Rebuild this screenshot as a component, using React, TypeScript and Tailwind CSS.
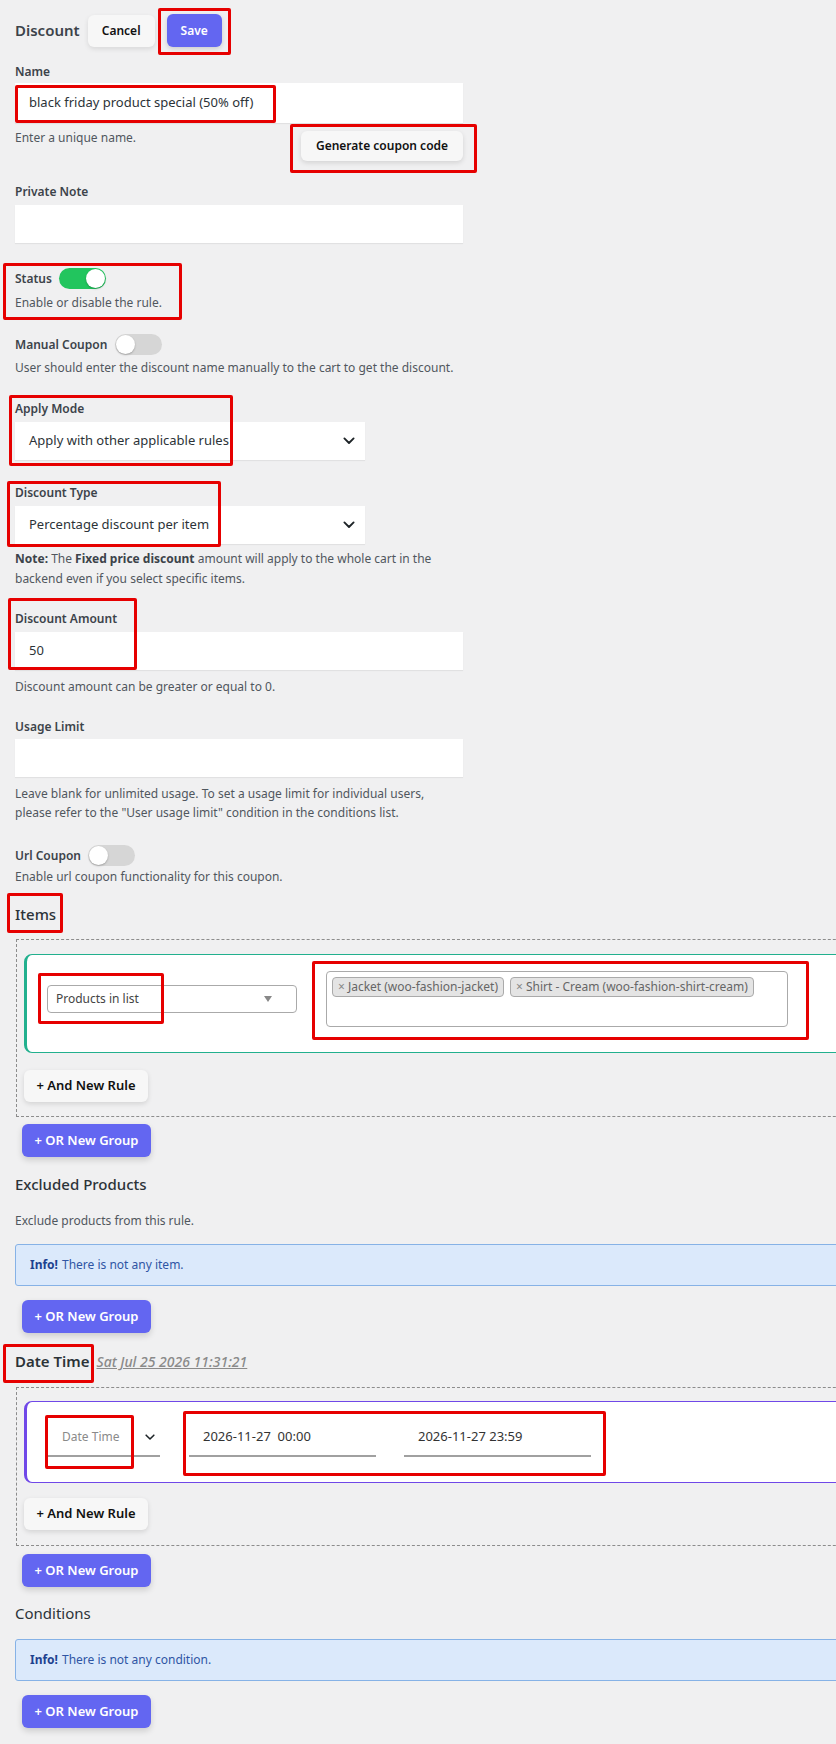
import React from "react";

function Label({ children }: { children: React.ReactNode }) {
  return <div className="text-[12px] leading-[18px] font-semibold text-[#3c434a]">{children}</div>;
}

function Help({ children, className = "" }: { children: React.ReactNode; className?: string }) {
  return <p className={`text-[12px] leading-[18px] text-[#50575e] ${className}`}>{children}</p>;
}

function Toggle({ on = false }: { on?: boolean }) {
  return (
    <span
      className={`inline-flex h-[21px] w-[47px] items-center rounded-full px-[1px] ${
        on ? "justify-end bg-[#22c55e]" : "justify-start bg-[#d6d6d6]"
      }`}
    >
      <span className="h-[19px] w-[19px] rounded-full bg-white shadow-[0_1px_2px_rgba(0,0,0,0.25)]" />
    </span>
  );
}

function Chevron({ size = 12 }: { size?: number }) {
  return (
    <svg width={size} height={size * 0.62} viewBox="0 0 13 8" fill="none">
      <path d="M1.5 1.5 6.5 6.5 11.5 1.5" stroke="#1d2327" strokeWidth="2" strokeLinecap="round" strokeLinejoin="round" />
    </svg>
  );
}

function PlainSelect({ value }: { value: string }) {
  return (
    <div className="mt-[4px] flex h-[38px] w-[350px] items-center justify-between bg-white pl-[14px] pr-[10px] shadow-[0_1px_1px_rgba(0,0,0,0.06)]">
      <span className="text-[13px] text-[#2c3338]">{value}</span>
      <Chevron />
    </div>
  );
}

function OrGroupButton({ className = "" }: { className?: string }) {
  return (
    <button className={`ml-[7px] flex h-[33px] w-[129px] items-center justify-center rounded-[6px] bg-[#6366f1] text-[13px] font-semibold text-white shadow-[0_3px_6px_rgba(0,0,0,0.15)] ${className}`}>
      + OR New Group
    </button>
  );
}

function AndRuleButton({ className = "" }: { className?: string }) {
  return (
    <button className={`flex h-[32px] w-[124px] items-center justify-center rounded-[6px] bg-[#f7f7f7] text-[13px] font-semibold text-[#111] shadow-[0_2px_5px_rgba(0,0,0,0.12)] ${className}`}>
      + And New Rule
    </button>
  );
}

function InfoBox({ text, className = "" }: { text: string; className?: string }) {
  return (
    <div className={`flex h-[42px] w-[900px] items-center rounded-[3px] border border-[#86b2e6] bg-[#dbe9fb] pl-[14px] text-[12px] ${className}`}>
      <span className="font-bold text-[#1d418f]">Info!</span>
      <span className="ml-[4px] text-[#2f55a4]">{text}</span>
    </div>
  );
}

function Tag({ text }: { text: string }) {
  return (
    <span className="flex h-[20px] items-center rounded-[4px] border border-[#aaa] bg-[#e4e4e4] px-[5px] text-[12px] text-[#666]">
      <span className="mr-[3px] text-[#888]">×</span>
      {text}
    </span>
  );
}

function UnderlineField({ children, width }: { children: React.ReactNode; width: string }) {
  return (
    <div className={`flex h-[38px] items-center border-b-2 border-[#a0a0a0] pl-[14px] ${width}`}>{children}</div>
  );
}

export default function App() {
  return (
    <div className="relative min-h-[1744px] w-[836px] overflow-hidden bg-[#f0f0f1] pl-[15px] font-['Noto_Sans','Open_Sans',sans-serif]">
      {/* header */}
      <div className="flex items-center pt-[14px]">
        <h1 className="text-[15px] font-semibold text-[#3c434a]">Discount</h1>
        <button className="ml-2 h-[32px] w-[67px] rounded-[6px] bg-[#f7f7f7] text-[12px] font-semibold text-[#111] shadow-[0_2px_5px_rgba(0,0,0,0.1)]">
          Cancel
        </button>
        <button className="ml-3 h-[33px] w-[55px] rounded-[6px] bg-[#6366f1] text-[12px] font-semibold text-white shadow-[0_2px_5px_rgba(0,0,0,0.15)]">
          Save
        </button>
      </div>

      {/* name */}
      <div className="mt-[16px]">
        <Label>Name</Label>
        <div className="mt-[2px] flex h-[40px] w-[448px] items-center bg-white pl-[14px] text-[13px] text-[#2c3338] shadow-[0_1px_1px_rgba(0,0,0,0.06)]">
          black friday product special (50% off)
        </div>
        <div className="flex w-[448px] items-start justify-between">
          <Help className="mt-[6px]">Enter a unique name.</Help>
          <button className="mt-[8px] h-[30px] w-[162px] rounded-[6px] bg-[#f7f7f7] text-[12px] font-semibold text-[#111] shadow-[0_2px_5px_rgba(0,0,0,0.12)]">
            Generate coupon code
          </button>
        </div>
      </div>

      {/* private note */}
      <div className="mt-[22px]">
        <Label>Private Note</Label>
        <div className="mt-[4px] h-[38px] w-[448px] bg-white shadow-[0_1px_1px_rgba(0,0,0,0.06)]" />
      </div>

      {/* status */}
      <div className="mt-[25px] flex items-center gap-[7px]">
        <Label>Status</Label>
        <Toggle on />
      </div>
      <Help className="mt-[5px]">Enable or disable the rule.</Help>

      <div className="mt-[22px] flex items-center gap-[8px]">
        <Label>Manual Coupon</Label>
        <Toggle />
      </div>
      <Help className="mt-[4px] whitespace-nowrap">
        User should enter the discount name manually to the cart to get the discount.
      </Help>

      {/* apply mode / type */}
      <div className="mt-[23px]">
        <Label>Apply Mode</Label>
        <PlainSelect value="Apply with other applicable rules" />
      </div>
      <div className="mt-[24px]">
        <Label>Discount Type</Label>
        <PlainSelect value="Percentage discount per item" />
      </div>
      <p className="mt-[5px] w-[448px] text-[12px] leading-[20px] text-[#50575e]">
        <b className="font-bold text-[#3c434a]">Note: </b>
        {"The "}
        <b className="font-bold text-[#3c434a]">Fixed price discount</b>
        {" amount will apply to the whole cart in the backend even if you select specific items."}
      </p>

      {/* amount */}
      <div className="mt-[21px]">
        <Label>Discount Amount</Label>
        <div className="mt-[4px] flex h-[38px] w-[448px] items-center bg-white pl-[14px] text-[13px] text-[#2c3338] shadow-[0_1px_1px_rgba(0,0,0,0.06)]">
          50
        </div>
      </div>
      <Help className="mt-[8px]">Discount amount can be greater or equal to 0.</Help>

      {/* usage limit */}
      <div className="mt-[22px]">
        <Label>Usage Limit</Label>
        <div className="mt-[3px] h-[38px] w-[448px] bg-white shadow-[0_1px_1px_rgba(0,0,0,0.06)]" />
      </div>
      <p className="mt-[7px] w-[448px] text-[12px] leading-[19px] text-[#50575e]">
        Leave blank for unlimited usage. To set a usage limit for individual users, please refer to the "User usage limit"
        condition in the conditions list.
      </p>

      <div className="mt-[23px] flex items-center gap-[7px]">
        <Label>Url Coupon</Label>
        <Toggle />
      </div>
      <Help className="mt-[2px]">Enable url coupon functionality for this coupon.</Help>

      {/* items */}
      <h2 className="mt-[17px] text-[15px] leading-[22px] font-medium text-[#2c3338]">Items</h2>
      <div className="ml-[1px] mt-[14px] w-[900px] border border-dashed border-[#8c8c8c] px-[7px] pt-[14px] pb-[14px]">
        <div className="flex items-center rounded-[8px] border border-l-[3px] border-[#22b08e] bg-white pl-[20px] pt-[16px] pb-[25px]">
          <div className="flex h-[28px] w-[250px] items-center justify-between rounded-[4px] border border-[#aaa] pl-[8px] pr-[24px] text-[12px] text-[#444]">
            Products in list
            <svg width="8" height="6" viewBox="0 0 8 6">
              <path d="M0 0h8L4 6z" fill="#888" />
            </svg>
          </div>
          <div className="ml-[29px] flex h-[56px] w-[462px] items-start gap-[6px] rounded-[4px] border border-[#aaa] pl-[5px] pt-[5px]">
            <Tag text="Jacket (woo-fashion-jacket)" />
            <Tag text="Shirt - Cream (woo-fashion-shirt-cream)" />
          </div>
        </div>
        <AndRuleButton className="mt-[17px]" />
      </div>
      <OrGroupButton className="mt-[7px]" />

      {/* excluded */}
      <h2 className="mt-[16px] text-[15px] leading-[22px] font-medium text-[#2c3338]">Excluded Products</h2>
      <Help className="mt-[17px]">Exclude products from this rule.</Help>
      <InfoBox text="There is not any item." className="mt-[14px]" />
      <OrGroupButton className="mt-[14px]" />

      {/* date time */}
      <div className="mt-[17px] flex items-baseline">
        <h2 className="text-[15px] leading-[22px] font-semibold text-[#2c3338]">Date Time</h2>
        <span className="ml-[7px] text-[14px] font-medium italic text-[#8a8a8a] underline">Sat Jul 25 2026 11:31:21</span>
      </div>
      <div className="ml-[1px] mt-[15px] w-[900px] border border-dashed border-[#8c8c8c] px-[7px] pt-[13px] pb-[15px]">
        <div className="flex items-end rounded-[8px] border border-l-[3px] border-[#7048e8] bg-white pl-[21px] pt-[17px] pb-[25px]">
          <UnderlineField width="w-[112px]">
            <span className="text-[12px] text-[#8a8a8a]">Date Time</span>
            <span className="ml-[26px]">
              <Chevron size={10} />
            </span>
          </UnderlineField>
          <div className="ml-[29px]">
            <UnderlineField width="w-[187px]">
              <span className="whitespace-pre text-[13px] text-[#333]">2026-11-27  00:00</span>
            </UnderlineField>
          </div>
          <div className="ml-[28px]">
            <UnderlineField width="w-[187px]">
              <span className="text-[13px] text-[#333]">2026-11-27 23:59</span>
            </UnderlineField>
          </div>
        </div>
        <AndRuleButton className="mt-[15px]" />
      </div>
      <OrGroupButton className="mt-[8px]" />

      {/* conditions */}
      <h2 className="mt-[15px] text-[15px] leading-[22px] text-[#2c3338]">Conditions</h2>
      <InfoBox text="There is not any condition." className="mt-[15px]" />
      <OrGroupButton className="mt-[14px]" />

      {/* highlight marks */}
      <div className="pointer-events-none absolute left-[158px] top-[8px] h-[47px] w-[73px] rounded-[2px] border-[3px] border-[#e60000]" />
      <div className="pointer-events-none absolute left-[15px] top-[85px] h-[38px] w-[261px] rounded-[2px] border-[3px] border-[#e60000]" />
      <div className="pointer-events-none absolute left-[290px] top-[124px] h-[49px] w-[187px] rounded-[2px] border-[3px] border-[#e60000]" />
      <div className="pointer-events-none absolute left-[3px] top-[263px] h-[57px] w-[179px] rounded-[2px] border-[3px] border-[#e60000]" />
      <div className="pointer-events-none absolute left-[9px] top-[395px] h-[71px] w-[224px] rounded-[2px] border-[3px] border-[#e60000]" />
      <div className="pointer-events-none absolute left-[7px] top-[481px] h-[66px] w-[214px] rounded-[2px] border-[3px] border-[#e60000]" />
      <div className="pointer-events-none absolute left-[8px] top-[598px] h-[72px] w-[129px] rounded-[2px] border-[3px] border-[#e60000]" />
      <div className="pointer-events-none absolute left-[7px] top-[893px] h-[40px] w-[56px] rounded-[2px] border-[3px] border-[#e60000]" />
      <div className="pointer-events-none absolute left-[38px] top-[973px] h-[51px] w-[126px] rounded-[2px] border-[3px] border-[#e60000]" />
      <div className="pointer-events-none absolute left-[312px] top-[961px] h-[79px] w-[497px] rounded-[2px] border-[3px] border-[#e60000]" />
      <div className="pointer-events-none absolute left-[3px] top-[1344px] h-[39px] w-[91px] rounded-[2px] border-[3px] border-[#e60000]" />
      <div className="pointer-events-none absolute left-[45px] top-[1415px] h-[54px] w-[89px] rounded-[2px] border-[3px] border-[#e60000]" />
      <div className="pointer-events-none absolute left-[183px] top-[1411px] h-[65px] w-[423px] rounded-[2px] border-[3px] border-[#e60000]" />
    </div>
  );
}
